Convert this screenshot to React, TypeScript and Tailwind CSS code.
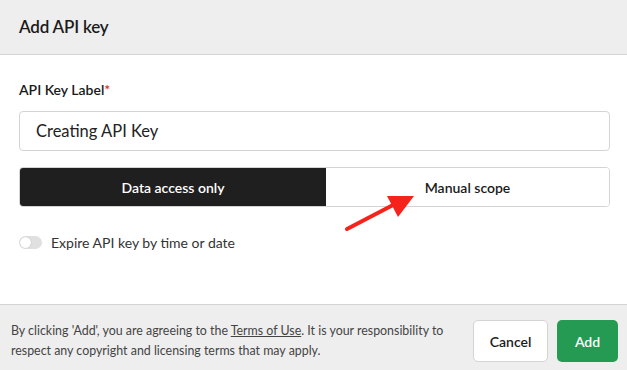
import { useState } from 'react';

const font = { fontFamily: 'Lato, "Open Sans", Arial, sans-serif' };

export default function App() {
  const [mode, setMode] = useState<'data' | 'manual'>('data');
  const [expire, setExpire] = useState(false);

  return (
    <div className="relative w-[627px] h-[370px] bg-white text-[#1a1a1a] flex flex-col overflow-hidden" style={font}>
      {/* Header */}
      <div className="h-[55px] shrink-0 bg-[#eeeeee] border-b border-[#d4d4d4] flex items-center px-[19px]">
        <h1 className="text-[17px] font-semibold tracking-[-0.2px]">Add API key</h1>
      </div>

      {/* Body */}
      <div className="flex-1 pl-[19px] pr-[17px] pt-[26px]">
        <label className="block text-[14px] font-semibold leading-[18px] mb-[12px]">
          API Key Label<span className="text-[#e0282e]">*</span>
        </label>
        <input
          defaultValue="Creating API Key"
          className="w-full h-[40px] rounded-[4px] border border-[#d4d4d4] px-[16px] text-[16.5px] text-[#222] outline-none"
          style={font}
        />

        <div className="mt-[16px] flex h-[40px] rounded-[4px] border border-[#d4d4d4] overflow-hidden">
          <button
            onClick={() => setMode('data')}
            className={`w-[306px] shrink-0 text-[14px] font-semibold ${mode === 'data' ? 'bg-[#1f1f1f] text-white' : 'bg-white text-[#1a1a1a]'}`}
          >
            Data access only
          </button>
          <button
            onClick={() => setMode('manual')}
            className={`flex-1 text-[14px] font-semibold ${mode === 'manual' ? 'bg-[#1f1f1f] text-white' : 'bg-white text-[#1a1a1a]'}`}
          >
            Manual scope
          </button>
        </div>

        <div className="mt-[25px] flex items-center gap-[9px]">
          <button
            onClick={() => setExpire(!expire)}
            className={`w-[23px] h-[13px] rounded-full flex items-center p-[1px] ${expire ? 'bg-[#24a148] justify-end' : 'bg-[#e0e0e0] justify-start'}`}
          >
            <span className="w-[11px] h-[11px] rounded-full bg-white shadow-[0_0_1px_rgba(0,0,0,0.3)]" />
          </button>
          <span className="text-[14px] text-[#333]">Expire API key by time or date</span>
        </div>
      </div>

      {/* Footer */}
      <div className="h-[66px] shrink-0 bg-[#eeeeee] border-t border-[#d4d4d4] flex items-center justify-between pl-[11px] pr-[9px] pt-[7px]">
        <p className="text-[12.4px] leading-[20px] text-[#444] w-[455px]">
          By clicking 'Add', you are agreeing to the <span className="underline">Terms of Use</span>. It is your responsibility to respect any copyright and licensing terms that may apply.
        </p>
        <div className="flex gap-[9px]">
          <button className="h-[42px] w-[75px] rounded-[5px] border border-[#d4d4d4] bg-white text-[14px] font-semibold text-[#1a1a1a]">
            Cancel
          </button>
          <button className="h-[42px] w-[61px] rounded-[5px] bg-[#259a52] text-[14px] font-semibold text-white">
            Add
          </button>
        </div>
      </div>

      {/* Annotation arrow */}
      <svg className="absolute left-0 top-0 pointer-events-none" width="627" height="370">
        <line x1="347" y1="229" x2="395" y2="204" stroke="#f5231c" strokeWidth="4" strokeLinecap="round" />
        <polygon points="414,196 387,196 398,217" fill="#f5231c" />
      </svg>
    </div>
  );
}
